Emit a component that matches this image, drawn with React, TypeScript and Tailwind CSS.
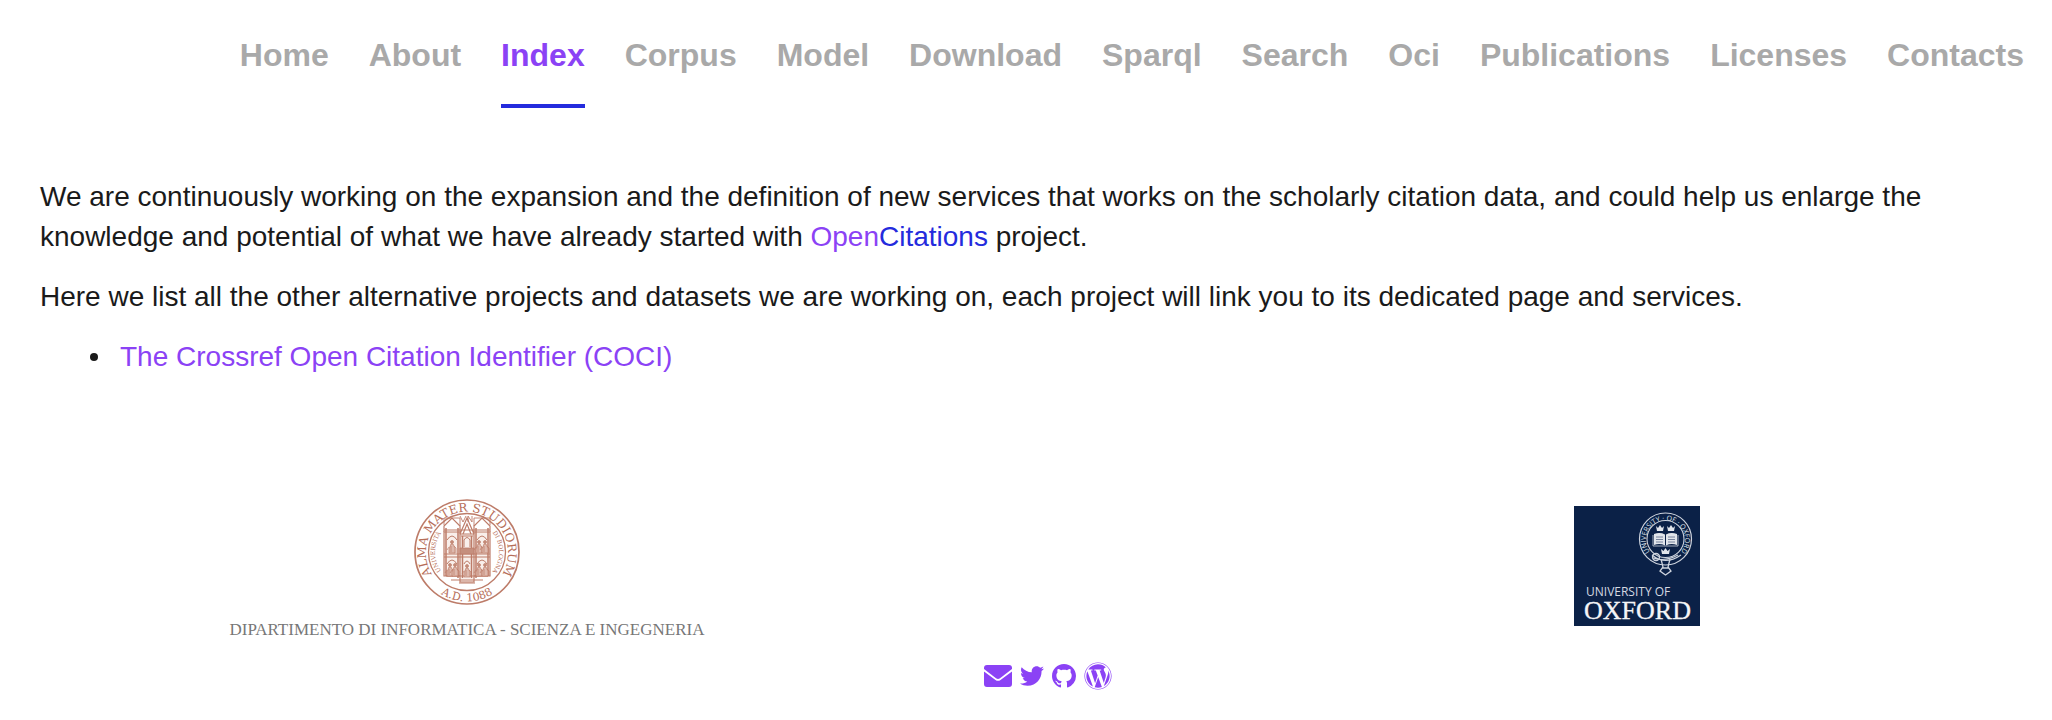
import { FaTwitter, FaWordpress } from "react-icons/fa";

const links = [
  "Home", "About", "Index", "Corpus", "Model", "Download",
  "Sparql", "Search", "Oci", "Publications", "Licenses", "Contacts",
];

function Figure({ x, y }: { x: number; y: number }) {
  return (
    <g transform={`translate(${x} ${y})`} strokeWidth="0.7">
      <circle cx="0" cy="-8" r="1.5" fill="#c58f7e" />
      <path d="M-1 -6 L-3 -1 L-3 3 H3 L3 -2 L1 -6 Z" fill="#ddb8ad" />
      <path d="M-3 -3 L-5 0 M2 -4 L4 -2 V3 M-1 -4 V2" />
    </g>
  );
}

function BolognaSeal() {
  return (
    <svg viewBox="0 0 108 108" className="size-27" role="img" aria-label="Alma Mater Studiorum">
      <defs>
        <path id="seal-ring" d="M25 83.7 A41 41 0 1 1 83 83.7" />
        <path id="seal-bottom" d="M10 76 A49 49 0 0 0 98 76" />
        <path id="seal-left" d="M34 79 A32 32 0 0 1 34 29" />
        <path id="seal-right" d="M74 29 A32 32 0 0 1 74 79" />
      </defs>
      <g fill="none" stroke="#bd7c69">
        <circle cx="54" cy="54" r="52" strokeWidth="1.7" />
        <circle cx="54" cy="54" r="38.5" strokeWidth="1.3" />
        <path d="M31 34 H47 V78 H31 Z M61 34 H77 V78 H61 Z M47 36 H61 V84 H47 Z" fill="#f9efeb" strokeWidth="1.2" />
        <path d="M31 34 V28 L39 20 L47 28 V34 M61 34 V28 L69 20 L77 28 V34 M47 36 L54 20 L61 36 M50 36 L54 26 L58 36" strokeWidth="1.2" />
        <path d="M31 27 V20 H47 V28 M61 28 V20 H77 V27" strokeWidth="0.9" />
        <path d="M33 30 V78 M45 30 V80 M63 30 V80 M75 30 V78 M49.5 38 V80 M58.5 38 V80" strokeWidth="1.5" />
        <path d="M31 32 H77 M31 56 H77 M31 59 H77 M33 78 H75 M38 82 H70 M46 85 H62 M48 38 H60" strokeWidth="1.2" />
        <path d="M34 42 Q39 34 44 42 M64 42 Q69 34 74 42 M34 66 Q39 58 44 66 M64 66 Q69 58 74 66 M51 49 V42 Q54 37 57 42 V49 M51 66 Q54 60 57 66" strokeWidth="1" />
        <path d="M47 50 H61 V56 H47 Z" fill="#c58f7e" strokeWidth="0.8" />
        <path d="M47 18 L50 24 L53 18 M55 24 V18 L59 24 V18" strokeWidth="0.9" />
        <Figure x={39} y={52} />
        <Figure x={66} y={52} />
        <Figure x={72} y={52} />
        <Figure x={37} y={75} />
        <Figure x={42} y={75} />
        <Figure x={54} y={76} />
        <Figure x={66} y={75} />
        <Figure x={72} y={75} />
      </g>
      <g fill="#b66d58" textAnchor="middle" fontFamily="DejaVu Serif, serif">
        <text fontSize="12"><textPath href="#seal-ring" startOffset="50%">ALMA MATER STUDIORUM</textPath></text>
        <text fontSize="11"><textPath href="#seal-bottom" startOffset="50%">A.D. 1088</textPath></text>
        <text fontSize="6"><textPath href="#seal-left" startOffset="50%">UNIVERSITÀ</textPath></text>
        <text fontSize="6"><textPath href="#seal-right" startOffset="50%">DI BOLOGNA</textPath></text>
      </g>
    </svg>
  );
}

function OxfordLogo() {
  return (
    <svg viewBox="0 0 126 120" className="h-30" role="img" aria-label="University of Oxford">
      <defs>
        <path id="belt" d="M77.5 47.5 A19.5 19.5 0 1 1 105.5 47.5" />
      </defs>
      <rect width="126" height="120" fill="#0b2147" />
      <g fill="none" stroke="#cdd3dd">
        <circle cx="91.5" cy="33" r="26" strokeWidth="1.2" />
        <circle cx="91.5" cy="33" r="18.5" strokeWidth="1.1" />
        <path d="M78 49 Q91 60 107 49 M79 52 Q91 56 104 49" strokeWidth="1.1" />
        <circle cx="82" cy="51" r="3.5" strokeWidth="1.4" />
        <path d="M87 53 L89 61 L86 65 L91.5 69 L97 65 L94 61 L96 53 M88 62 H95" strokeWidth="1.3" />
      </g>
      <g fill="#e1e5eb">
        <path d="M80 28 Q86 26 91 28.5 V39.5 Q86 37 80 39 Z M92 28.5 Q97 26 103 28 V39 Q97 37 92 39.5 Z" />
        <path d="M82 20 L84 22 L86 19 L88 22 L90 20 L89 25 H83 Z M93 20 L95 22 L97 19 L99 22 L101 20 L100 25 H94 Z M87 43 L89.5 45 L91.5 42 L93.5 45 L96 43 L95 48 H88 Z" />
      </g>
      <path d="M82 31 H89 M82 33.5 H89 M82 36 H89 M94 31 H101 M94 33.5 H101 M94 36 H101" stroke="#5a6a88" strokeWidth="0.8" />
      <path d="M79 29 V40 H104 V29" fill="none" stroke="#cdd3dd" strokeWidth="0.8" />
      <text fontSize="7" fill="#dfe3ea" textAnchor="middle" fontFamily="Open Sans, sans-serif">
        <textPath href="#belt" startOffset="50%">UNIVERSITY · OF · OXFORD</textPath>
      </text>
      <text x="12" y="90" fontSize="12" fill="#d5dae2" fontFamily="Open Sans, sans-serif">UNIVERSITY OF</text>
      <text x="10" y="113" fontSize="26" fill="#f4f5f7" stroke="#f4f5f7" strokeWidth="0.3" fontFamily="Liberation Serif, serif">OXFORD</text>
    </svg>
  );
}

export default function App() {
  return (
    <div className="bg-white font-['Liberation_Sans',Arial,sans-serif] text-[28px] leading-10 text-[#1a1a1a]">
      <nav className="flex flex-wrap justify-end gap-x-10 px-7 pt-[35px] text-[32px] font-bold">
        {links.map((name) => (
          <a
            key={name}
            href="#"
            className={
              name === "Index"
                ? "border-b-4 border-[#242bdd] pb-[29px] leading-10 text-[#8b42f5]"
                : "border-b-4 border-transparent pb-[29px] leading-10 text-[#a9a9a9]"
            }
          >
            {name}
          </a>
        ))}
      </nav>
      <main className="flex flex-col gap-5 px-10 pt-[69px]">
        <p>
          We are continuously working on the expansion and the definition of new services that works on the scholarly
          citation data, and could help us enlarge the knowledge and potential of what we have already started with{" "}
          <a href="#" className="text-[#8b42f5]">Open<span className="text-[#242bdd]">Citations</span></a> project.
        </p>
        <p>
          Here we list all the other alternative projects and datasets we are working on, each project will link you
          to its dedicated page and services.
        </p>
        <ul className="pl-[50px]">
          <li className="flex items-center gap-[22px] before:size-2 before:rounded-full before:bg-[#1a1a1a]">
            <a href="#" className="text-[#8b42f5]">The Crossref Open Citation Identifier (COCI)</a>
          </li>
        </ul>
      </main>
      <footer className="px-10 pt-[121px]">
        <div className="grid grid-cols-[433fr_187fr_380fr]">
          <a href="#" className="flex flex-col items-center gap-3">
            <BolognaSeal />
            <span className="font-['Liberation_Serif',serif] text-[17px] leading-6 whitespace-nowrap text-[#777777]">
              DIPARTIMENTO DI INFORMATICA - SCIENZA E INGEGNERIA
            </span>
          </a>
          <a href="#" className="col-start-3 flex items-start justify-center pt-2">
            <OxfordLogo />
          </a>
        </div>
        <div className="flex items-center justify-center gap-2 pt-5 pl-11 text-[#8b42f5]">
          <a href="#" aria-label="Email">
            <svg viewBox="0 0 28 22" className="w-7" fill="currentColor">
              <path d="M3 0 H25 Q28 0 28 3 V4 L16 13.2 Q14 14.6 12 13.2 L0 4 V3 Q0 0 3 0 Z" />
              <path d="M0 6.5 L11.5 15 Q14 16.7 16.5 15 L28 6.5 V19 Q28 22 25 22 H3 Q0 22 0 19 Z" />
            </svg>
          </a>
          <a href="#" aria-label="Twitter"><FaTwitter className="size-6" /></a>
          <a href="#" aria-label="GitHub">
            <svg viewBox="0 0 16 16" className="size-6" fill="currentColor">
              <path d="M8 0C3.58 0 0 3.58 0 8c0 3.54 2.29 6.53 5.47 7.59.4.07.55-.17.55-.38 0-.19-.01-.82-.01-1.49-2.01.37-2.53-.49-2.69-.94-.09-.23-.48-.94-.82-1.13-.28-.15-.68-.52-.01-.53.63-.01 1.08.58 1.23.82.72 1.21 1.87.87 2.33.66.07-.52.28-.87.51-1.07-1.78-.2-3.64-.89-3.64-3.95 0-.87.31-1.59.82-2.15-.08-.2-.36-1.02.08-2.12 0 0 .67-.21 2.2.82.64-.18 1.32-.27 2-.27s1.36.09 2 .27c1.53-1.04 2.2-.82 2.2-.82.44 1.1.16 1.92.08 2.12.51.56.82 1.27.82 2.15 0 3.07-1.87 3.75-3.65 3.95.29.25.54.73.54 1.48 0 1.07-.01 1.93-.01 2.2 0 .21.15.46.55.38A8.01 8.01 0 0 0 16 8c0-4.42-3.58-8-8-8Z" />
            </svg>
          </a>
          <a href="#" aria-label="WordPress"><FaWordpress className="size-7" /></a>
        </div>
      </footer>
    </div>
  );
}
